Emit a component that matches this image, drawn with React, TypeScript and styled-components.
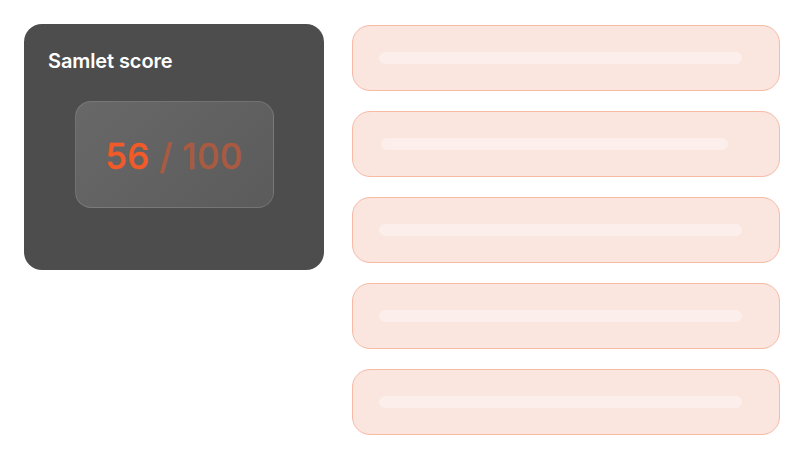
import { createGlobalStyle, styled } from 'styled-components';

const GlobalStyle = createGlobalStyle`
    html, body {
        margin: 0;
        padding: 0;
        background: #fff;
        font-family: Inter, 'Noto Sans', sans-serif;
    }
`;

const Page = styled.div`
    display: grid;
    grid-template-columns: 300px 1fr;
    gap: 28px;
    align-items: start;
    padding: 24px;
`;

const ScoreCard = styled.section`
    height: 246px;
    box-sizing: border-box;
    padding: 25px 24px;
    background-color: #4d4d4d;
    border-radius: 18px;
    display: flex;
    flex-direction: column;
`;

const Title = styled.h2`
    margin: 0;
    color: #fff;
    font-size: 20px;
    font-weight: 600;
    line-height: 24px;
    letter-spacing: -0.1px;
`;

const ScoreBox = styled.div`
    align-self: center;
    margin-top: 28px;
    width: 199px;
    height: 107px;
    box-sizing: border-box;
    display: flex;
    align-items: center;
    justify-content: center;
    padding-top: 3px;
    border-radius: 16px;
    border: 1px solid rgba(255, 255, 255, 0.13);
    background: linear-gradient(135deg, #686868 0%, #5b5b5b 100%);
    font-size: 35px;
    font-weight: 500;
    letter-spacing: 0.3px;
    -webkit-text-stroke: 0.4px currentColor;
`;

const Value = styled.span`
    color: #f25a28;
`;

const Max = styled.span`
    color: #a95b42;
    white-space: pre;
`;

const List = styled.div`
    display: flex;
    flex-direction: column;
    gap: 20px;
    margin-top: 1px;
`;

const Row = styled.div`
    height: 66px;
    box-sizing: border-box;
    display: flex;
    align-items: center;
    padding: 0 0 1px 26px;
    border: 1px solid #f6baa5;
    border-radius: 18px;
    background-color: #fae5df;
`;

const Bar = styled.div<{ $width: number; $inset: number }>`
    height: 12px;
    width: ${(p) => p.$width}px;
    margin-left: ${(p) => p.$inset}px;
    border-radius: 6px;
    background-color: #fcefeb;
`;

const bars = [
    { width: 363, inset: 0 },
    { width: 347, inset: 2 },
    { width: 363, inset: 0 },
    { width: 363, inset: 0 },
    { width: 363, inset: 0 },
];

export default function App() {
    return (
        <>
            <GlobalStyle />
            <Page>
                <ScoreCard>
                    <Title>Samlet score</Title>
                    <ScoreBox>
                        <Value>56</Value>
                        <Max> / 100</Max>
                    </ScoreBox>
                </ScoreCard>
                <List>
                    {bars.map((b, i) => (
                        <Row key={i}>
                            <Bar $width={b.width} $inset={b.inset} />
                        </Row>
                    ))}
                </List>
            </Page>
        </>
    );
}
